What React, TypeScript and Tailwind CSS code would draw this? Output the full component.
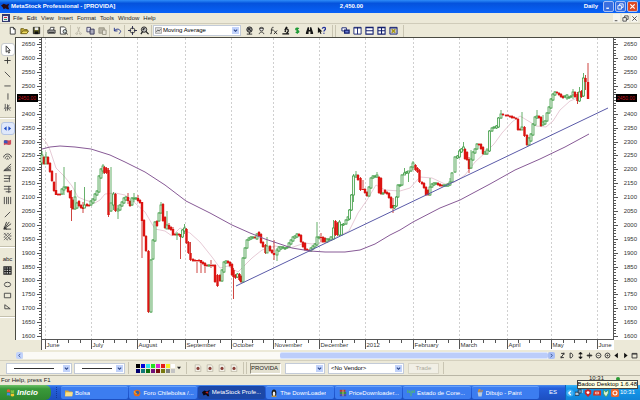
import React from "react";

type Kids = { children?: React.ReactNode };

const UI = "font-['Liberation_Sans',Arial,sans-serif]";

/* ---------- price series: x, open, close, high, low in plot units ---------- */
const CANDLES: number[][] = [
  [42, 163, 155, 151, 165], [44, 157, 164], [46, 164, 157, 152, 164], [48, 157, 164], [50, 163, 172], [52, 171, 181], [54, 182, 191],
  [56, 190, 195, 173, 195], [58, 194, 195], [60, 194, 195], [62, 194, 189], [64, 190, 187, 167, 195], [66, 188, 187], [68, 187, 192],
  [70, 191, 198], [71.5, 197, 208, 190, 221], [73, 200, 209], [75, 209, 197, 182, 210], [77, 208, 203], [79, 201, 206], [81, 205, 208],
  [83, 207, 209, 202, 213], [84.5, 208, 205, 187, 208], [87, 204, 206], [89, 205, 206], [91, 205, 201], [93, 203, 199], [95, 200, 194],
  [97, 195, 191], [99, 192, 176], [101, 178, 169], [103, 171, 166, 164, 174], [104.5, 167, 173], [106.5, 168, 173], [108.5, 170, 215, 168, 217],
  [111, 211, 203, 167, 212], [113.5, 205, 194, 192, 210], [115.5, 194, 211], [118, 211, 209, 205, 219], [120, 210, 205], [122, 206, 202],
  [124, 203, 198], [126, 200, 197], [128, 197, 201, 193, 204], [130, 201, 206], [132, 205, 198], [134, 199, 198, 193, 202], [136, 199, 198],
  [138, 198, 201, 195, 202], [140, 200, 203], [142, 202, 221, 202, 258], [144, 220, 236], [146, 236, 251], [148.5, 251, 312],
  [151, 312, 260], [153, 259, 240], [155, 241, 222], [157, 221, 226], [159, 221, 213], [161, 213, 205, 202, 214], [163, 204, 221],
  [165, 217, 228], [167, 229, 225, 211, 229], [169, 225, 229, 223, 230], [171, 227, 230], [173, 229, 235, 227, 236], [175, 234, 235],
  [177, 235, 234, 232, 240], [179, 234, 235], [180.5, 234, 237, 234, 259], [182.5, 237, 230], [184.5, 231, 228, 224, 234], [186.5, 229, 243],
  [188.5, 242, 253], [190.5, 253, 260, 242, 261], [193, 259, 261], [195, 260, 261], [197, 260, 261, 260, 273], [199, 260, 261],
  [201, 260, 263, 260, 273], [203, 262, 264], [205, 263, 266, 262, 273], [207, 265, 266], [209, 266, 265], [211, 265, 266, 260, 268],
  [213, 265, 266], [215, 265, 282], [217.5, 275, 286], [220, 275, 281], [222, 281, 270], [224, 272, 262], [226, 263, 261],
  [228, 261, 263], [230, 262, 266], [232, 264, 275], [233.5, 270, 277, 268, 299], [235.5, 275, 278], [237.5, 277, 274], [239.5, 274, 280],
  [241, 276, 282], [243, 282, 258], [245, 258, 248], [247, 248, 240], [249, 240, 238], [251, 239, 237], [253, 238, 237], [255, 237, 238],
  [257, 239, 234], [259, 232, 236], [261, 234, 243], [263, 242, 247], [265.5, 245, 253], [267, 253, 246, 237, 253], [270, 246, 251],
  [272, 250, 253], [274, 253, 255, 240, 260], [277, 255, 250, 248, 261], [279, 251, 247], [281, 249, 247], [283, 248, 247], [285, 249, 248],
  [287, 248, 247], [289, 247, 243], [291, 244, 240], [293, 241, 237], [295, 238, 236], [297, 237, 234], [299, 234, 236], [301, 235, 242],
  [303, 242, 247], [305, 243, 250], [307, 249, 250], [309, 250, 251], [311, 251, 248], [313, 249, 246], [315, 247, 244], [317, 245, 237, 222, 246],
  [319, 238, 237], [321, 237, 238, 233, 242], [323, 237, 242], [325, 238, 242], [327, 242, 239], [329, 240, 239], [331, 240, 237],
  [333.5, 239, 228, 220, 240], [335.5, 221, 235], [337.5, 223, 235], [339.5, 235, 222, 220, 236], [341.5, 235, 225], [343.5, 225, 224],
  [346, 224, 220], [348, 220, 217], [349.5, 219, 210], [351.5, 210, 195], [353.5, 195, 176, 174, 202], [356, 177, 175, 171, 178],
  [358, 175, 180], [360.5, 178, 190], [363, 189, 190, 180, 190], [365, 189, 193], [367, 192, 196], [369, 196, 187], [371, 188, 178],
  [373, 178, 176], [375, 177, 176], [377, 177, 175, 172, 178], [379, 177, 193], [381, 178, 194], [383, 194, 193], [385, 190, 193],
  [387, 192, 194], [389, 193, 198], [391, 197, 208], [393, 205, 208, 198, 213], [394.5, 208, 206], [396.5, 206, 197], [398, 197, 185],
  [400, 186, 185], [402, 185, 175], [404.5, 175, 173, 168, 175], [406.5, 173, 172], [408.5, 173, 171, 171, 182], [411, 171, 167],
  [413, 167, 163, 161, 170], [415.5, 165, 170], [417.5, 168, 172], [419.5, 170, 182], [422, 182, 184], [424, 183, 188], [426, 187, 195],
  [428, 190, 195], [430, 195, 187, 178, 196], [432, 187, 184], [434, 185, 183], [436, 184, 183], [438, 183, 185], [440, 184, 186],
  [442, 185, 186], [444, 186, 185], [446, 186, 185], [448, 186, 184], [450, 185, 182, 178, 186], [452, 182, 173], [455, 172, 157],
  [457.5, 158, 156], [459.5, 157, 151, 149, 158], [461.5, 152, 149], [463.5, 150, 147, 142, 150], [465, 149, 159], [467, 152, 160],
  [469, 159, 169, 157, 173], [471, 168, 159, 150, 169], [473, 160, 152], [475, 153, 149], [477, 149, 144], [479, 144, 145], [481, 144, 149],
  [483, 147, 154], [485, 154, 152], [487, 154, 150, 148, 155], [489.5, 151, 131], [492, 131, 128], [494, 128, 127], [496.5, 128, 126],
  [498.5, 127, 118], [501, 118, 114, 110, 119], [503, 114, 115], [506, 115, 116], [508, 115, 116], [510, 116, 117], [512, 116, 118],
  [514, 117, 118], [516, 118, 119], [518, 119, 130], [520, 129, 130], [522, 130, 127, 112, 130], [524.5, 127, 136], [527, 135, 145],
  [529, 145, 138], [531, 141, 134], [533, 135, 124], [535, 125, 117], [537, 118, 116, 110, 119], [539, 116, 118], [541, 117, 126],
  [543, 125, 122, 115, 126], [545, 124, 121], [547, 121, 113], [549, 113, 107], [551, 108, 99], [553, 100, 94], [555, 95, 92],
  [557, 92, 93], [559, 93, 95], [561, 94, 97], [563, 96, 98], [565, 97, 96], [567, 98, 95, 94, 100], [569, 98, 97], [571, 97, 96],
  [573, 95, 92, 89, 99], [575, 92, 97], [577.5, 94, 101, 92, 104], [579.5, 101, 92, 87, 102], [581.5, 91, 97], [583.5, 96, 78, 73, 97],
  [585.5, 78, 82, 75, 90], [588, 82, 99, 63, 99],
];

const LONG_AVG =
  "42,149 50,147 60,146 75,147 91,149 110,155 125,162 145,172 165,185 186,201 210,213 232,225 250,233 265,239 280,244 292,248 310,251 325,252 345,252 360,250 375,244 390,235 400,230 413,222 440,208 460,200 475,192 490,184 515,170 540,159 565,147 589,134";
const SHORT_AVG =
  "42,138 46,142 50,150 56,168 64,176 72,186 78,197 85,200 95,203 100,200 105,194 115,193 125,195 135,203 145,212 155,229 165,231 172,236 180,228 190,233 200,242 212,257 220,268 228,266 238,272 244,266 252,258 262,250 275,246 290,248 305,243 312,244 320,243 330,240 349,231 358,213 367,200 376,185 385,190 400,191 410,188 420,177 432,178 445,184 455,182 465,175 475,162 485,153 494,144 502,133 512,122 520,116 530,122 536,126 546,127 553,121 560,110 570,101 580,97 584,92";

const MONTHS: [number, string][] = [
  [45.5, "June"], [91.5, "July"], [137.5, "August"], [185.5, "September"], [231.5, "October"], [273.5, "November"], [319.5, "December"],
  [365.5, "2012"], [413.5, "February"], [459.5, "March"], [507.5, "April"], [551.5, "May"], [597.5, "June"],
];

const priceY = (v: number) => 44.3 + (2650 - v) * 0.2778;

function Chart() {
  const minor: number[] = [];
  for (let v = 1600; v <= 2670; v += 10) minor.push(v);
  const major = minor.filter((v) => v % 50 === 0);
  const weeks: number[] = [];
  MONTHS.slice(0, -1).forEach(([x], i) => {
    const step = (MONTHS[i + 1][0] - x) / 4;
    for (let k = 1; k < 4; k++) weeks.push(x + step * k);
  });
  return (
    <svg viewBox="15 37 625 313" className={"block h-auto w-full " + UI} role="img" aria-label="PROVIDA daily price chart">
      <rect x="15" y="37" width="625" height="313" fill="#ece9d8" />
      <rect x="15" y="37" width="625" height="303" fill="#fff" />
      <rect x="41" y="339" width="573" height="11" fill="#fff" />
      <g shapeRendering="crispEdges">
        {MONTHS.map(([x], i) => (
          <line key={i} x1={x} x2={x} y1="38" y2="339" stroke="#cfcfcf" strokeDasharray="2 2" />
        ))}
        <path d="M15 37.5H640M15.5 37V340" stroke="#4a4a42" />
        <path d="M41.5 38V350M613.5 38V340M41 339.5H614" stroke="#555" fill="none" />
        {minor.map((v) => {
          const y = Math.round(priceY(v)) + 0.5;
          const n = v % 50 === 0 ? 4 : 2;
          return <path key={v} d={`M${41 - n} ${y}H41M614 ${y}H${614 + n}`} stroke="#555" />;
        })}
        {weeks.map((x, i) => (
          <line key={i} x1={x} x2={x} y1="340" y2="343" stroke="#555" />
        ))}
        {MONTHS.map(([x], i) => (
          <line key={i} x1={x} x2={x} y1="339" y2="349" stroke="#555" />
        ))}
      </g>
      <polyline points={SHORT_AVG} fill="none" stroke="#dcb4c4" strokeWidth="0.7" />
      {CANDLES.map(([x, o, c, h, l], i) => {
        const up = c < o;
        const top = Math.min(o, c);
        const height = Math.max(1, Math.abs(o - c));
        const hi = h ?? top - 1;
        const lo = l ?? top + height + 1;
        return up ? (
          <g key={i} stroke="#3f9c45" strokeWidth="0.8">
            <line x1={x} x2={x} y1={hi} y2={lo} />
            <rect x={x - 1} y={top} width="2" height={height} fill="#eef7ee" />
          </g>
        ) : (
          <g key={i}>
            <line x1={x} x2={x} y1={hi} y2={lo} stroke="#c8302a" strokeWidth="0.9" />
            <rect x={x - 1.2} y={top} width="2.4" height={height} fill="#dc1412" />
          </g>
        );
      })}
      <polyline points={LONG_AVG} fill="none" stroke="#875a96" strokeWidth="1" />
      <line x1="236" y1="286" x2="608" y2="108" stroke="#5a5aa8" strokeWidth="1" />
      <g fontSize="6" fill="#333">
        {major
          .filter((v) => v !== 2450)
          .map((v) => (
            <g key={v}>
              <text x="35" y={priceY(v) + 2} textAnchor="end">{v}</text>
              <text x="637" y={priceY(v) + 2} textAnchor="end">{v}</text>
            </g>
          ))}
        {MONTHS.map(([x, name], i) => (
          <text key={i} x={x + 1} y="347">{name}</text>
        ))}
        <rect x="17" y="94" width="21" height="8" fill="#000" />
        <rect x="616" y="94" width="21" height="8" fill="#000" />
        <g fill="#c4141c" textAnchor="middle">
          <text x="27" y="100" fontSize="5">2450.00</text>
          <text x="626" y="100" fontSize="5">2450.00</text>
        </g>
      </g>
    </svg>
  );
}

/* ---------- small drawings, all on a 10 x 10 grid ---------- */
const ART: Record<string, React.ReactNode> = {
  new: <path d="M2.500 1.500h3.500l2 2v5.500h-5.500zM6 1.500v2h2" fill="#fff" stroke="#333" />,
  open: <><path d="M1 8.500V3h3l1 1h3v1.500" fill="#c9b240" stroke="#6b5b10" /><path d="M1 8.500l2-3h6.500l-2 3z" fill="#f0dd60" stroke="#6b5b10" /></>,
  save: <><path d="M1.500 1.500h7v7h-7z" fill="#5c5c20" stroke="#222" /><path d="M3 1.500h4v3H3z" fill="#eee" /><path d="M3 6h4v3H3z" fill="#111" /></>,
  print: <><path d="M3 4.500l1-3h4l-1 3" fill="#fff" stroke="#444" /><path d="M1 4.500h8v3.500H1z" fill="#aaa" stroke="#333" /><path d="M2 7h6" stroke="#222" /></>,
  preview: <><path d="M1.500 1h4.500l1.500 1.500v6.500h-6z" fill="#fff" stroke="#444" /><circle cx="6.500" cy="6" r="2" fill="#cdd" stroke="#333" /><path d="M8 7.500l1.500 2" stroke="#333" /></>,
  cut: <path d="M4 1l2 6M6.500 1L4 7M3 7.500a1 1 0 1 0 .1 0M7 7.500a1 1 0 1 0 .1 0" stroke="#bbb7a6" />,
  copy: <><path d="M1 1.500h4v5H1z" fill="#dde" stroke="#446" /><path d="M4.500 3.500h4.500v5.500H4.500z" fill="#aab" stroke="#335" /></>,
  paste: <><path d="M1 2h6v6H1z" fill="#b8b4a6" stroke="#999585" /><path d="M5 4.500h4v5H5z" fill="#e8e5da" stroke="#999585" /></>,
  undo: <path d="M1.500 2v3.500h3.500M1.500 5.500c2-3 6-2.500 7 .5 0 1-1 2-2 2.500" stroke="#1c2c88" />,
  cross: <><circle cx="5" cy="5" r="2.800" stroke="#333" /><path d="M5 0v3.500M5 6.500V10M0 5h3.500M6.500 5H10" stroke="#224" /></>,
  zoom: <><circle cx="4.500" cy="4" r="3" fill="#bbb" stroke="#222" /><path d="M6.500 6L9.500 9M3 4.500l2-2M1 9l2-3" stroke="#222" strokeWidth="1.400" /></>,
  globe: <><circle cx="5" cy="4" r="3" fill="#888" stroke="#222" /><path d="M3 2l4 4M3 5l3-3M2 9h6M5 7v2" stroke="#222" /></>,
  expert: <><circle cx="5" cy="3.500" r="2" fill="#eee" stroke="#333" /><path d="M2.500 2.500h5M2.500 9c0-3 5-3 5 0" stroke="#333" /></>,
  fx: <path d="M5 1.500c-2-.5-2 1-2.500 7H1.500M2 4.500h3M5.500 5l3.500 4M9 5L5.500 9" stroke="#222" />,
  scope: <><path d="M6.500 1L4.500 5" stroke="#111" strokeWidth="2" /><path d="M4 5.500l1.500 1M7 3c2 2 1 4-1 5M1.500 8.700h7.500" stroke="#111" strokeWidth="1.400" /></>,
  dollar: <path d="M6.500 3c-1-1-3.500-.8-3.500.6s3.500 1 3.500 2.400-2.500 1.600-3.500.7M4.800 2V8.500" stroke="#1d9a35" strokeWidth="1.400" />,
  binoc: <path d="M3 1.500h1.500v3h1v-3H7l2 6v1.500H6V6H4v3H1V7.500z" fill="#161616" />,
  help: <><path d="M1 1v7l1.500-1.500L4 9l1-.5L4 6h2z" fill="#111" /><path d="M6 3c0-2 3.500-2 3.500 0 0 1.500-1.800 1.300-1.800 3M7.700 7.500v1" stroke="#1f2f9a" strokeWidth="1.400" /></>,
  cascade: <><path d="M1 2h5v3.500H1z" fill="#fff" stroke="#14206e" /><path d="M4 4.500h5V8H4z" fill="#6a7ad0" stroke="#14206e" strokeWidth="1.400" /></>,
  tileV: <path d="M1 1.500h8v7.500H1zM5 1.500V9M1 2.200h8" fill="#fff" stroke="#14206e" />,
  tileH: <path d="M1 1.500h8v7.500H1zM1 5.200h8M1 2h8" fill="#fff" stroke="#14206e" strokeWidth="1.200" />,
  tileQ: <path d="M1 1.500h8v7.500H1zM5 1.500V9M1 5.200h8M1 2h8" fill="#fff" stroke="#14206e" strokeWidth="1.200" />,
  layout: <><path d="M1 1.500h8v7.500H1zM1 2.200h8" fill="#ccd" stroke="#14206e" /><path d="M3 3.500l4 4M7 3.500l-4 4" stroke="#a99a10" strokeWidth="1.600" /></>,
  arrow: <path d="M3.500 1v7L5 6.500 6.300 9l1-.5L6.200 6H8z" fill="#fff" stroke="#333" />,
  plus: <path d="M5 1.500v7M1.500 5h7" stroke="#333" />,
  diag: <path d="M2 2l6 6" stroke="#444" />,
  hline: <path d="M1.500 5.500h7" stroke="#444" />,
  vline: <path d="M5.500 1.500v7" stroke="#444" />,
  pitch: <path d="M2.500 1v4L1 6.500M5 1.500v7M2 5.500h7M7 2L5 5l3 3.500M3 6v3" stroke="#555" />,
  scroll: <path d="M4 2.500v5L1 5zM6 2.500v5L9 5z" fill="#1c4bc4" />,
  flag: <><path d="M1 3c3-2 5 1 8-1v5c-3 2-5-1-8 1z" fill="#cc4a5a" /><path d="M1 3c2-1 3 0 4 0v3c-2 0-3-1-4 0z" fill="#3c54b8" /></>,
  arcs: <path d="M.5 6c1-5 8-5 9 0M2.300 7.500c.5-4 5-4 5.400 0M4.200 8.500c0-2 1.600-2 1.600 0" stroke="#444" />,
  fan: <path d="M1 8.500L9 1M1 8.500l8-4.500M1 8.500l8-2M1 8.500h8" stroke="#444" />,
  fib1: <path d="M1 2h8M1 5h7M1 8h5M7 2v7" stroke="#444" />,
  fib2: <path d="M1 1.500h8M1 4.500h8M3 7.500h6M6.500 1v8" stroke="#444" />,
  bars: <path d="M1.500 1v8M4 1v8M6 1v8M8.500 1v8" stroke="#444" />,
  slash: <path d="M2 8l6-6" stroke="#444" />,
  gann: <path d="M1 9L4 1M1 9l6-8M1 9l8-6M1 9h8M1 7l3 2z" stroke="#333" fill="#333" />,
  mesh: <path d="M1 3l2-2M1 6l5-5M1 9l8-8M4 9l5-5M7 9l2-2M1 1l8 8M1 5l4 4M5 1l4 4" stroke="#555" strokeWidth=".8" />,
  grid: <path d="M1 1h8v8H1zM3.500 1v8M6.200 1v8M1 3.500h8M1 6.200h8" stroke="#222" fill="#ccc" strokeWidth="1.200" />,
  oval: <ellipse cx="5" cy="5" rx="3.500" ry="2.500" stroke="#444" />,
  square: <path d="M1.500 2.500h7v5h-7z" stroke="#444" />,
  tri: <path d="M2 7.500V3l6 4.500z" stroke="#444" />,
  doc: <><path d="M1.500 1h5l2 2v6.500h-7z" fill="#f4f2ea" stroke="#bbb7a6" /><circle cx="5" cy="5.500" r="2" fill="#8a4038" /></>,
  bull: <path d="M0 4l3-2 3 1 3-1-1 3 1 3H7L5 7 3 8 2 6z" fill="#2a0a10" />,
  winlogo: <><path d="M1 2c1.500-1 2.500-.6 3.600 0v3C3.500 4.500 2.500 4.200 1 5z" fill="#e8592c" /><path d="M5.300 2.200c1.300.6 2.300.6 3.700 0v3c-1.400.6-2.400.6-3.700 0z" fill="#7cc242" /><path d="M1 5.700c1.500-.8 2.500-.5 3.600 0v3C3.500 8 2.500 7.800 1 8.500z" fill="#3e8eea" /><path d="M5.300 6c1.300.6 2.300.6 3.700 0v3c-1.400.6-2.400.6-3.700 0z" fill="#f7c62e" /></>,
  folder: <><path d="M0 2h4l1 1h4v6H0z" fill="#d6a93a" /><path d="M1 4h9L9 9H0z" fill="#f8e08a" /></>,
  fox: <><circle cx="5" cy="5" r="4.200" fill="#e66b1a" /><circle cx="5.600" cy="4.500" r="2.300" fill="#3465a8" /><path d="M1 3c2 1 1 3 4 3" stroke="#f7b030" strokeWidth="1.300" /></>,
  bullred: <><path d="M0 4l3-2 3 1 4-2-2 4 1 4H7L5 7 2 8z" fill="#10060c" /><path d="M4 4l4-1-1 3z" fill="#c02020" /></>,
  penguin: <><ellipse cx="5" cy="5" rx="3" ry="4.500" fill="#1a1a1a" /><ellipse cx="5" cy="6" rx="1.600" ry="3" fill="#eee" /><path d="M2 9h6" stroke="#e0a020" strokeWidth="1.400" /></>,
  rar: <><path d="M1 1h7v2.500H1z" fill="#b03838" /><path d="M1 3.700h8v2.500H1z" fill="#3a8a48" /><path d="M1 6.500h8V9H1z" fill="#4a48b0" /><path d="M5 1v8" stroke="#e8d060" /></>,
  signal: <path d="M1 1v4M3 2v3M5 2v7M7 2v3M9 1v4" stroke="#57c84a" />,
  paint: <><path d="M2 4h6L7 9.500H3z" fill="#b8cbe0" /><path d="M3 4l1-4M5 4V0M7 4l1-3" stroke="#e09028" strokeWidth="1.300" /></>,
  chevL: <><circle cx="5" cy="5" r="4.500" fill="#3fb0f5" /><path d="M6 2.500L3.500 5 6 7.500" stroke="#fff" strokeWidth="1.500" /></>,
  net: <><path d="M0 4h5v4H0z" fill="#bcd" stroke="#234" /><path d="M4 1h4v4H4z" fill="#79b" stroke="#234" /><path d="M9 1v4" stroke="#dff" /></>,
  badge: <><path d="M5 0l4 2v4L5 10 1 6V2z" fill="#c82828" /><circle cx="5" cy="4.500" r="1.800" fill="#fff" /></>,
  ati: <><path d="M1 2h9v6H0z" fill="#d8301c" /><path d="M3 4h4v2H3z" stroke="#fff" strokeWidth=".8" /></>,
  people: <path d="M2 1l3 3 3-3v4l-2 4H4L2 6z" fill="#d8f0d8" stroke="#3a9a50" />,
  badoo: <><rect x="0" y="0" width="10" height="10" rx="2" fill="#e8642c" /><circle cx="5" cy="5" r="2.500" stroke="#fff" strokeWidth="1.300" /></>,
  s1: <path d="M3 2h4L3 8h4M7 1v3M3 6v3" stroke="#333" strokeWidth="1.400" />,
  s2: <path d="M3 1.500v7M3 1.500c5 0 5 7 0 7" stroke="#333" strokeWidth="1.400" />,
  s3: <path d="M5 0l2.500 3h-5zM5 10L2.500 7h5zM5 2v6" fill="#111" stroke="#111" strokeWidth=".8" />,
  s4: <path d="M5 1v8M1 5h8M3 3v4M7 3v4" stroke="#111" />,
  s5: <><circle cx="5" cy="5" r="3.500" stroke="#333" strokeWidth="1.300" /><path d="M3.500 5h3" stroke="#333" /></>,
  s6: <><circle cx="5" cy="5" r="3.500" stroke="#333" strokeWidth="1.300" /><path d="M3.500 5h3M5 3.500v3" stroke="#333" /></>,
  s7: <path d="M7 1v8L2 5z" fill="#111" />,
  s8: <path d="M3 1v8l5-4z" fill="#111" />,
  s9: <path d="M1.500 2h7v6.500h-7zM1.500 3h7" stroke="#333" strokeWidth="1.300" />,
  indicator: <><path d="M.5 1h9v8h-9z" fill="#e4e4e4" stroke="#888" /><path d="M2 7l2-3 2 2 2-3" stroke="#333" /></>,
};

function Pic({ n, className = "h-2.5 w-2.5" }: { n: string; className?: string }) {
  return (
    <svg viewBox="0 0 10 10" fill="none" className={"shrink-0 " + className} aria-hidden="true">
      {ART[n]}
    </svg>
  );
}

function Tool({ n, on = "" }: { n: string; on?: string }) {
  return (
    <button type="button" aria-label={n} className={"flex h-[11px] w-3 shrink-0 items-center justify-center " + on}>
      <Pic n={n} className="h-[9px] w-[9px]" />
    </button>
  );
}

const Rule = () => <span className="mx-px h-3 w-px shrink-0 bg-[#c9c5b2]" />;
const HRule = () => <span className="my-1 h-0.5 w-full shrink-0 border-t border-[#c5c1ae] bg-white" />;

function Drop({ label, value, className, pad = "pl-1" }: { label: string; value: string; className: string; pad?: string }) {
  return (
    <div className={"relative h-[11px] shrink-0 " + className}>
      <select aria-label={label} className={"h-full w-full appearance-none border border-[#c3cbd8] bg-white pr-2 text-[6px] leading-[9px] text-black " + pad}>
        <option>{value}</option>
      </select>
      <span className="pointer-events-none absolute inset-y-0.5 right-0.5 flex w-[7px] items-center justify-center bg-[#c2d3fb]">
        <svg viewBox="0 0 6 6" className="h-[5px] w-[5px]" fill="none"><path d="M1 2l2 2 2-2" stroke="#2a4488" strokeWidth="1.300" /></svg>
      </span>
    </div>
  );
}

function LineDrop({ label, className, line }: { label: string; className: string; line: string }) {
  return (
    <div className={"relative shrink-0 " + className}>
      <Drop label={label} value="" className="w-full" />
      <span className={"pointer-events-none absolute top-[5px] left-2 h-px bg-[#333] " + line} />
    </div>
  );
}

function WinButton({ label, red = false, children }: Kids & { label: string; red?: boolean }) {
  return (
    <button type="button" aria-label={label} className={"flex h-[11px] w-[11px] items-center justify-center rounded-xs border border-[#a8c0f4] " + (red ? "bg-[#dd4a25]" : "bg-[#3a6fe0]")}>
      <svg viewBox="0 0 8 8" className="h-[7px] w-[7px]" fill="none" stroke="#fff">{children}</svg>
    </button>
  );
}

function MdiButton({ label, d }: { label: string; d: string }) {
  return (
    <button type="button" aria-label={label} className="flex h-2 w-[7px] items-center justify-center bg-[#f6f5ee]">
      <svg viewBox="0 0 8 8" className="h-[7px] w-[7px]" fill="none" stroke="#444"><path d={d} /></svg>
    </button>
  );
}

const LEFT = ["arrow", "plus", "~", "diag", "hline", "vline", "pitch", "-", "scroll", "~", "flag", "~", "arcs", "fan", "fib1", "fib2", "bars", "~", "slash", "gann", "mesh", "-", "abc", "grid", "~", "oval", "square", "tri"];

const PRESSED: Record<string, string> = {
  arrow: "rounded-xs bg-white outline outline-[#c9ccd0]",
  scroll: "rounded-xs bg-[#dfe8fb] outline outline-[#b4c4e4]",
};

const SWATCHES = [
  "bg-[#000]", "bg-[#0000d8]", "bg-[#30e0e8]", "bg-[#20e020]", "bg-[#d820d0]", "bg-[#e81818]", "bg-[#f0f020]", "bg-[#fff]",
  "bg-[#000070]", "bg-[#107878]", "bg-[#107010]", "bg-[#701078]", "bg-[#781010]", "bg-[#787810]", "bg-[#808080]", "bg-[#c4c4c4]",
];

const TASKS: [string, string][] = [
  ["folder", "Bolsa"], ["fox", "Foro Chilebolsa /..."], ["bullred", "MetaStock Profe..."], ["penguin", "The DownLoader"],
  ["rar", "PriceDownloader..."], ["signal", "Estado de Cone..."], ["paint", "Dibujo - Paint"],
];

export default function App() {
  return (
    <div className={"relative flex min-h-screen flex-col overflow-hidden bg-[#ece9d8] text-[6px] leading-[9px] text-[#222] " + UI}>
      <header className="grid h-[13px] grid-cols-[1fr_auto_1fr] items-center bg-linear-to-b from-[#2f8cf8] via-[#0552dc] via-25% to-[#0862f8] pr-0.5 pl-px font-bold text-white">
        <h1 className="flex items-center gap-px"><Pic n="bull" className="h-[9px] w-[9px]" />MetaStock Professional - [PROVIDA]</h1>
        <span className="translate-x-8">2,450.00</span>
        <div className="flex items-center justify-end gap-px">
          <span className="pr-1">Daily</span>
          <WinButton label="Minimize"><path d="M1.500 6h3" strokeWidth="1.500" /></WinButton>
          <WinButton label="Restore"><path d="M3 3V1h4v4H5M1 3h4v4H1z" /></WinButton>
          <WinButton label="Close" red><path d="M1.500 1.500l5 5M6.500 1.500l-5 5" strokeWidth="1.400" /></WinButton>
        </div>
      </header>

      <nav className="flex h-[10px] items-center pr-0.5 pl-0.5">
        <svg viewBox="0 0 8 8" className="mr-[3px] h-2 w-2" aria-hidden="true">
          <rect width="8" height="8" fill="#333a70" /><rect x="1" y="2" width="5" height="5" fill="#dfe4f4" /><path d="M2 3h3v1H2z" fill="#d03030" /><path d="M2 5h3v1H2z" fill="#2c9a50" />
        </svg>
        <div className="flex flex-1 gap-1">
          {["File", "Edit", "View", "Insert", "Format", "Tools", "Window", "Help"].map((m) => (
            <button key={m} type="button">{m}</button>
          ))}
        </div>
        <div className="flex gap-0.5">
          <MdiButton label="Minimize chart" d="M2 6.500h3" />
          <MdiButton label="Restore chart" d="M3 3V1h4v4H5M1 3h4v4H1z" />
          <MdiButton label="Close chart" d="M1.500 1.500l5 5M6.500 1.500l-5 5" />
        </div>
      </nav>

      <div className="flex h-[14px] items-center border-t border-[#d0ccba] pl-1.5">
        <Tool n="new" /><Tool n="open" /><Tool n="save" /><Rule />
        <Tool n="print" /><Tool n="preview" /><Rule />
        <Tool n="cut" /><Tool n="copy" /><Tool n="paste" /><Rule />
        <Tool n="undo" /><Rule />
        <Tool n="cross" /><Tool n="zoom" /><Rule />
        <div className="relative">
          <Drop label="Indicator" value="Moving Average" className="w-[88px]" pad="pl-[9px]" />
          <span className="pointer-events-none absolute top-0.5 left-0.5"><Pic n="indicator" className="h-[7px] w-[7px]" /></span>
        </div>
        <div className="ml-0.5 flex">
          {["globe", "expert", "fx", "scope", "dollar", "binoc", "help"].map((n) => <Tool key={n} n={n} />)}
        </div>
        <div className="ml-1 flex items-center"><Rule /><Rule /></div>
        <div className="ml-0.5 flex">
          {["cascade", "tileV", "tileH", "tileQ", "layout"].map((n) => <Tool key={n} n={n} />)}
        </div>
        <span className="ml-1 h-3 w-px bg-[#c9c5b2]" />
      </div>

      <main className="flex">
        <aside className="flex w-[15px] shrink-0 flex-col items-center pt-[7px]">
          {LEFT.map((n, i) =>
            n === "~" ? <span key={i} className="h-[3px] shrink-0" />
            : n === "-" ? <HRule key={i} />
            : n === "abc" ? <button key={i} type="button" className="mt-0.5 h-[11px] text-[6px] leading-[11px]">abc</button>
            : <Tool key={i} n={n} on={PRESSED[n]} />
          )}
          <HRule />
        </aside>
        <section className="min-w-0 flex-1">
          <Chart />
          <div className="flex h-[10px] items-center pl-px">
            <button type="button" aria-label="Scroll left" className="flex h-[7px] w-[7px] items-center justify-center rounded-xs bg-[#c2d3fb]">
              <svg viewBox="0 0 6 6" className="h-[5px] w-[5px]" fill="none"><path d="M4 1L2 3l2 2" stroke="#2a4488" /></svg>
            </button>
            <div className="flex h-[7px] flex-1 justify-end bg-[#fbfaf6]">
              <div className="h-full w-[51%] rounded-xs border-y border-[#dbe5fd] bg-[#bccdfa]" />
            </div>
            <button type="button" aria-label="Scroll right" className="flex h-[7px] w-[7px] items-center justify-center rounded-xs bg-[#a9bff5]">
              <svg viewBox="0 0 6 6" className="h-[5px] w-[5px]" fill="none"><path d="M2 1l2 2-2 2" stroke="#2a4488" /></svg>
            </button>
            <div className="flex items-center gap-0.5 pr-0.5 pl-1">
              {["s1", "s2", "s3", "s4", "s5", "s6", "s7", "s8", "s9"].map((n) => (
                <button key={n} type="button" aria-label={n} className="flex h-2 w-[7px] items-center justify-center"><Pic n={n} className="h-[7px] w-[7px]" /></button>
              ))}
            </div>
          </div>
        </section>
      </main>

      <div className="flex h-[15px] items-center border-t border-[#d4d0be] pl-1.5">
        <LineDrop label="Line style" className="w-[66px]" line="w-10" />
        <LineDrop label="Line weight" className="ml-0.5 w-[51px]" line="w-[30px]" />
        <div className="mx-0.5 flex"><Rule /></div>
        <div className="ml-1 grid grid-cols-8 gap-px">
          {SWATCHES.map((c, i) => <button key={i} type="button" aria-label={"Colour " + (i + 1)} className={"h-1 w-1 " + c} />)}
        </div>
        <svg viewBox="0 0 6 6" className="ml-0.5 h-1 w-1"><path d="M0 1h6L3 5z" fill="#222" /></svg>
        <div className="mr-1 ml-1 flex"><Rule /></div>
        {[0, 1, 2, 3].map((i) => (
          <button key={i} type="button" aria-label={"Template " + (i + 1)} className="flex w-3 justify-center"><Pic n="doc" className="h-2 w-2" /></button>
        ))}
        <div className="mx-0.5 flex"><Rule /><Rule /></div>
        <input aria-label="Symbol" defaultValue="PROVIDA" className="h-[11px] w-[31px] border border-[#8e8b7c] border-r-white border-b-white bg-[#e4e1d0] text-[6px] leading-[9px]" />
        <Drop label="Account" value="" className="ml-1 w-[40px]" />
        <Drop label="Vendor" value="<No Vendor>" className="ml-[3px] w-[76px]" pad="pl-0.5" />
        <button type="button" disabled className="ml-1 h-[11px] w-[31px] border border-[#d8d5c6] bg-[#f1efe5] text-[#aba899]">Trade</button>
        <span className="ml-1 h-3 w-px bg-[#c9c5b2]" />
      </div>

      <footer className="flex h-[10px] items-start justify-between border-t border-[#b9b6a6] pl-px">
        <span>For Help, press F1</span>
        <span className="flex items-center gap-3 pr-5 leading-[5px]">10:31 <span className="h-1 w-1 rounded-full bg-[#2c9a35]" /></span>
      </footer>

      <div className="mt-auto flex h-[15px] items-stretch bg-linear-to-b from-[#4a8bf0] via-[#2560dc] via-20% to-[#1d4fc0] text-white">
        <button type="button" className="flex w-[51px] shrink-0 items-center gap-0.5 rounded-r-md bg-linear-to-b from-[#6cc068] via-[#3a9a3a] via-25% to-[#2f8630] pl-1.5 text-[8px] font-bold italic">
          <Pic n="winlogo" className="h-[9px] w-[9px]" />Inicio
        </button>
        <span className="my-0.5 mr-1 ml-[5px] w-px shrink-0 border-l border-dotted border-[#123a98]" />
        <div className="flex min-w-0 flex-1 gap-px py-px">
          {TASKS.map(([icon, name], i) => (
            <button key={name} type="button" className={"flex min-w-0 flex-1 items-center gap-0.5 rounded-xs pl-1 whitespace-nowrap " + (i === 2 ? "bg-[#1c48a8]" : "border-t border-[#6aa2fa] bg-[#3c7df0]")}>
              <Pic n={icon} className="h-2 w-2" />
              <span className="truncate">{name}</span>
            </button>
          ))}
        </div>
        <div className="flex shrink-0 items-center pr-1 pl-2.5"><span className="w-3">ES</span></div>
        <div className="flex w-[75px] shrink-0 items-center gap-px border-l border-[#1260b8] bg-linear-to-b from-[#3ab4f8] via-[#159aec] via-20% to-[#1184d8] pr-1.5">
          {["chevL", "net", "badge", "ati", "people", "badoo"].map((n) => <Pic key={n} n={n} className="h-2 w-2" />)}
          <span className="ml-auto">10:31</span>
        </div>
      </div>

      <div role="tooltip" className="absolute right-0.5 bottom-[11px] h-[9px] border border-[#444] bg-[#ffffe1] leading-[7px] whitespace-nowrap text-black">Badoo Desktop 1.6.48</div>
    </div>
  );
}
